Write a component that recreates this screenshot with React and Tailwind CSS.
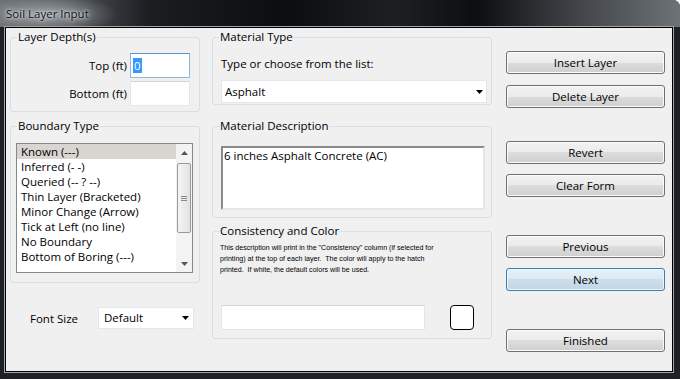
import React from 'react';

const Caret = ({ up, color = '#000' }) => (
  <svg width="7" height="4" viewBox="0 0 7 4">
    <path d={up ? 'M0 4h7L3.5 0z' : 'M0 0h7L3.5 4z'} fill={color} />
  </svg>
);

const Group = ({ title, className, children }) => (
  <div className={`relative rounded-[3px] border border-[#d5dfe5] ${className}`}>
    <span className="absolute -top-[9px] left-[6px] bg-[#f0f0f0] px-[1px] leading-[16px]">{title}</span>
    {children}
  </div>
);

const Btn = ({ children, def, className }) => (
  <button
    className={`block h-[23px] w-full rounded-[3px] border leading-[21px] ${
      def
        ? 'border-[#3c7fb1] bg-[linear-gradient(#e6f1f9_0%,#dce9f3_50%,#cddeeb_50%,#c3d6e5_100%)] shadow-[inset_0_0_0_1px_#eef6fc]'
        : 'border-[#707070] bg-[linear-gradient(#f2f2f2_0%,#ebebeb_50%,#dddddd_50%,#cfcfcf_100%)] shadow-[inset_0_0_0_1px_#fbfbfb]'
    } ${className}`}
  >
    {children}
  </button>
);

const boundaries = [
  'Known (---)',
  'Inferred (- -)',
  'Queried (-- ? --)',
  'Thin Layer (Bracketed)',
  'Minor Change (Arrow)',
  'Tick at Left (no line)',
  'No Boundary',
  'Bottom of Boring (---)',
];

export default function App() {
  return (
    <div className="flex h-[379px] w-[680px] flex-col overflow-hidden rounded-tr-[7px] bg-[#1d2125] font-['Open_Sans',sans-serif] text-[11.5px] text-black">
      {/* title bar */}
      <div className="flex h-[27px] items-center bg-[radial-gradient(ellipse_70px_20px_at_48px_14px,rgba(205,210,215,0.55),transparent),linear-gradient(90deg,#686d72_0%,#50555a_10%,#1b1e21_22%,#0b0d0f_42%,#1d2023_58%,#0c0e10_70%,#3e4246_84%,#6d7276_100%)] pl-[6px] pt-[1px]">
        <span className="leading-[16px] text-[#111] [text-shadow:0_0_6px_#e8ecef,0_0_3px_#e8ecef]">Soil Layer Input</span>
      </div>

      {/* client */}
      <div className="flex-1 pb-[7px] pl-[5px] pr-[7px]">
        <div className="flex h-full border border-black bg-[#f0f0f0] pl-[4px] pt-[9px] shadow-[0_0_0_1px_#9ea4aa]">
          {/* left column */}
          <div className="flex w-[190px] flex-col">
            <Group title="Layer Depth(s)" className="flex h-[75px] flex-col items-end gap-[3px] pr-[9px] pt-[15px]">
              <div className="flex items-center gap-[3px]">
                <span>Top (ft)</span>
                <div className="flex h-[25px] w-[60px] items-center border border-[#8fb7df] border-t-[#5b93c9] bg-white pl-[2px]">
                  <span className="bg-[#3399ff] px-[1px] leading-[15px] text-white">0</span>
                </div>
              </div>
              <div className="flex items-center gap-[3px]">
                <span>Bottom (ft)</span>
                <div className="h-[25px] w-[60px] border border-[#e2e7ed] border-t-[#d0d6dc] bg-white" />
              </div>
            </Group>

            <Group title="Boundary Type" className="mt-[14px] h-[157px] pl-[5px] pt-[16px]">
              <div className="flex h-[130px] w-[177px] border border-[#828790] bg-white">
                <div className="flex-1">
                  {boundaries.map((b, i) => (
                    <div
                      key={b}
                      className={`h-[15px] pl-[4px] leading-[15px] ${i === 0 ? 'bg-[#d9d6d1]' : ''}`}
                    >
                      {b}
                    </div>
                  ))}
                </div>
                <div className="flex w-[16px] flex-col bg-[#f3f3f3]">
                  <div className="flex h-[17px] items-center justify-center">
                    <Caret up color="#555" />
                  </div>
                  <div className="flex-1 px-[1px] pt-[2px]">
                    <div className="flex h-[70px] flex-col items-center justify-center gap-[1px] rounded-[2px] border border-[#9a9a9a] bg-[linear-gradient(90deg,#f4f4f4,#e2e2e2)]">
                      <div className="h-px w-[6px] bg-[#8a8a8a]" />
                      <div className="h-px w-[6px] bg-[#8a8a8a]" />
                      <div className="h-px w-[6px] bg-[#8a8a8a]" />
                    </div>
                  </div>
                  <div className="flex h-[17px] items-center justify-center">
                    <Caret color="#555" />
                  </div>
                </div>
              </div>
            </Group>

            <div className="mt-[24px] flex items-center pl-[20px]">
              <span className="w-[68px] pt-[2px]">Font Size</span>
              <div className="flex h-[22px] w-[96px] items-center justify-between border border-[#e2e7ed] bg-white pl-[5px] pr-[4px]">
                <span>Default</span>
                <Caret />
              </div>
            </div>
          </div>

          {/* middle column */}
          <div className="ml-[12px] flex w-[280px] flex-col">
            <Group title="Material Type" className="h-[68px] pl-[8px] pr-[4px] pt-[18px]">
              <div className="leading-[16px]">Type or choose from the list:</div>
              <div className="mt-[8px] flex h-[23px] items-center justify-between border border-[#e2e7ed] bg-white pl-[3px] pr-[3px]">
                <span>Asphalt</span>
                <Caret />
              </div>
            </Group>

            <Group title="Material Description" className="mt-[21px] h-[92px] pl-[8px] pr-[6px] pt-[19px]">
              <div className="h-[64px] border-2 border-b-[#e6e6e6] border-l-[#8b8b8b] border-r-[#e6e6e6] border-t-[#8b8b8b] bg-white pl-[1px] leading-[16px]">
                6 inches Asphalt Concrete (AC)
              </div>
            </Group>

            <Group title="Consistency and Color" className="mt-[13px] flex h-[108px] flex-col pl-[7px] pt-[11px]">
              <div className="whitespace-pre font-['Liberation_Sans',sans-serif] text-[7.1px] leading-[11px] text-black">
                {'This description will print in the "Consistency" column (if selected for\nprinting) at the top of each layer.  The color will apply to the hatch\nprinted.  If white, the default colors will be used.'}
              </div>
              <div className="mt-auto flex pb-[8px] pl-[1px]">
                <div className="h-[25px] w-[204px] border border-[#e2e7ed] border-t-[#d0d6dc] bg-white" />
                <div className="ml-[25px] h-[25px] w-[24px] rounded-[4px] border border-black bg-white" />
              </div>
            </Group>
          </div>

          {/* buttons */}
          <div className="ml-[14px] flex w-[159px] flex-col">
            <Btn className="mt-[14px]">Insert Layer</Btn>
            <Btn className="mt-[11px]">Delete Layer</Btn>
            <Btn className="mt-[33px]">Revert</Btn>
            <Btn className="mt-[10px]">Clear Form</Btn>
            <Btn className="mt-[38px]">Previous</Btn>
            <Btn def className="mt-[10px]">Next</Btn>
            <Btn className="mt-[38px]">Finished</Btn>
          </div>
        </div>
      </div>
    </div>
  );
}
